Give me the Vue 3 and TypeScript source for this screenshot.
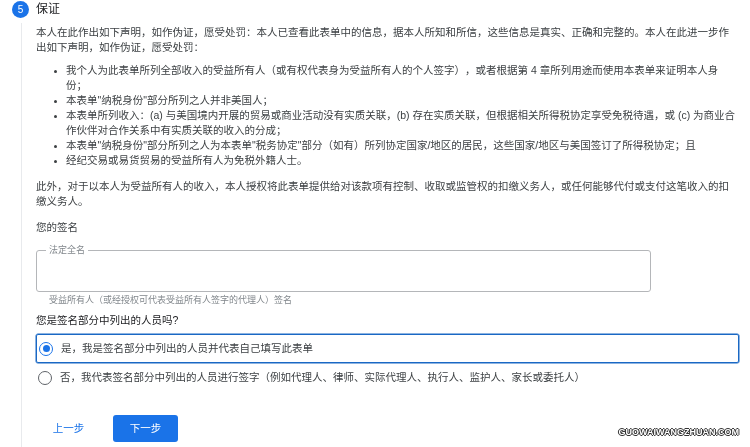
<script setup lang="ts">
const bullets: string[] = [
  '我个人为此表单所列全部收入的受益所有人（或有权代表身为受益所有人的个人签字），或者根据第 4 章所列用途而使用本表单来证明本人身份；',
  '本表单"纳税身份"部分所列之人并非美国人；',
  '本表单所列收入：(a) 与美国境内开展的贸易或商业活动没有实质关联，(b) 存在实质关联，但根据相关所得税协定享受免税待遇，或 (c) 为商业合作伙伴对合作关系中有实质关联的收入的分成；',
  '本表单"纳税身份"部分所列之人为本表单"税务协定"部分（如有）所列协定国家/地区的居民，这些国家/地区与美国签订了所得税协定；且',
  '经纪交易或易货贸易的受益所有人为免税外籍人士。',
]
</script>

<template>
  <div class="page">
    <header class="head">
      <span class="num">5</span>
      <h2 class="title">保证</h2>
    </header>
    <div class="body">
      <p class="para">本人在此作出如下声明，如作伪证，愿受处罚：本人已查看此表单中的信息，据本人所知和所信，这些信息是真实、正确和完整的。本人在此进一步作出如下声明，如作伪证，愿受处罚：</p>
      <ul class="list">
        <li v-for="b in bullets" :key="b">{{ b }}</li>
      </ul>
      <p class="para">此外，对于以本人为受益所有人的收入，本人授权将此表单提供给对该款项有控制、收取或监管权的扣缴义务人，或任何能够代付或支付这笔收入的扣缴义务人。</p>
      <p class="sign">您的签名</p>
      <fieldset class="field">
        <legend>法定全名</legend>
      </fieldset>
      <p class="hint">受益所有人（或经授权可代表受益所有人签字的代理人）签名</p>
      <p class="question">您是签名部分中列出的人员吗?</p>
      <div class="option selected">
        <span class="radio on"><span class="dot"></span></span>
        <span>是，我是签名部分中列出的人员并代表自己填写此表单</span>
      </div>
      <div class="option">
        <span class="radio"></span>
        <span class="second">否，我代表签名部分中列出的人员进行签字（例如代理人、律师、实际代理人、执行人、监护人、家长或委托人）</span>
      </div>
      <div class="actions">
        <button class="back" type="button">上一步</button>
        <button class="next" type="button">下一步</button>
      </div>
    </div>
    <div class="mark">GUOWAIWANGZHUAN.COM</div>
  </div>
</template>

<style>
html, body { margin: 0; background: #fff; overflow: hidden; }
</style>

<style scoped>
.page {
  position: relative;
  width: 750px;
  height: 447px;
  overflow: hidden;
  font-family: "Liberation Sans", "Noto Sans CJK SC", sans-serif;
  font-size: 10.5px;
  line-height: 15px;
  color: #3c4043;
  text-spacing-trim: space-all;
  filter: blur(0.25px);
}
.head {
  display: flex;
  align-items: center;
  height: 18px;
  padding-left: 12px;
  gap: 7px;
}
.num {
  width: 17px;
  height: 17px;
  border-radius: 50%;
  background: #1a73e8;
  color: #fff;
  font-size: 10px;
  line-height: 17px;
  text-align: center;
}
.title {
  margin: 0;
  padding-top: 1px;
  font-size: 12px;
  font-weight: 400;
  color: #202124;
}
.body {
  margin: 5px 0 0 21px;
  padding: 2px 0 0 14px;
  height: 422px;
  border-left: 1px solid #e8eaed;
}
.para {
  margin: 0;
  width: 695px;
}
.list {
  margin: 8px 0 11px;
  padding: 0 0 0 30px;
  width: 672px;
}
.list li { line-height: 15px; }
.list li::marker { font-size: 9px; }
.sign { margin: 11px 0 0; }
.field {
  margin: 10px 0 0;
  padding: 0 0 0 9px;
  width: 615px;
  height: 47px;
  box-sizing: border-box;
  border: 1px solid #b4b6b9;
  border-radius: 3px;
  min-inline-size: 0;
}
.field legend {
  padding: 0 3px;
  font-size: 9px;
  line-height: 10px;
  color: #80868b;
}
.hint {
  margin: 1px 0 0 13px;
  font-size: 9px;
  line-height: 14px;
  color: #80868b;
}
.question { margin: 6px 0 0; color: #202124; }
.option {
  display: flex;
  align-items: center;
  gap: 8px;
  box-sizing: border-box;
  width: 703px;
  height: 30px;
  padding-left: 2px;
}
.second { margin-top: -2px; }
.selected {
  margin-top: 6px;
  border: 1px solid #1a68c4;
  box-shadow: 0 0 0 0.5px #1a68c4;
  border-radius: 2px;
  height: 29px;
}
.radio {
  display: flex;
  align-items: center;
  justify-content: center;
  width: 14px;
  height: 14px;
  box-sizing: border-box;
  border: 1.5px solid #5f6368;
  border-radius: 50%;
  flex: none;
}
.radio.on { border-color: #1a73e8; }
.dot {
  width: 7px;
  height: 7px;
  border-radius: 50%;
  background: #1a73e8;
}
.actions {
  display: flex;
  align-items: center;
  gap: 12px;
  margin-top: 22px;
}
.actions button {
  border: 0;
  border-radius: 3px;
  height: 27px;
  font: inherit;
  font-size: 10.5px;
  padding: 0;
}
.back {
  background: #fff;
  color: #1a73e8;
  width: 65px;
}
.next {
  background: #1a73e8;
  color: #fff;
  width: 65px;
}
.mark {
  position: absolute;
  right: 11px;
  top: 427px;
  font-size: 9px;
  line-height: 11px;
  font-weight: 700;
  color: #fff;
  text-shadow: -1px 0 #333, 1px 0 #333, 0 -1px #333, 0 1px #333;
}
</style>
